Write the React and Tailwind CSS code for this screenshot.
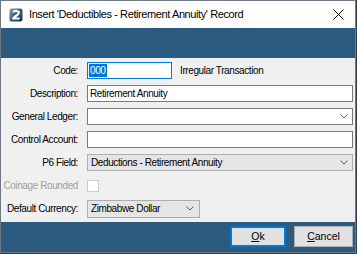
import React from "react";

const font = { fontFamily: '"Liberation Sans", Arial, sans-serif' };

function Chevron() {
  return (
    <svg width="8" height="5" viewBox="0 0 8 5" className="shrink-0">
      <path d="M0.5 0.5 L4 4 L7.5 0.5" fill="none" stroke="#606060" strokeWidth="1" />
    </svg>
  );
}

function AppIcon() {
  return (
    <svg width="14" height="14" viewBox="0 0 14 14" className="shrink-0">
      <defs>
        <linearGradient id="ig" x1="0" y1="0" x2="1" y2="1">
          <stop offset="0" stopColor="#9aa7b3" />
          <stop offset="0.5" stopColor="#3c5a78" />
          <stop offset="1" stopColor="#1d2f44" />
        </linearGradient>
      </defs>
      <rect x="0.5" y="0.5" width="13" height="13" rx="2" fill="url(#ig)" />
      <path d="M4 4 Q7 2 10 4 Q10 6.5 6 8.5 L4 10.5 L10.5 10.5" fill="none" stroke="#fff" strokeWidth="2" strokeLinejoin="round" />
    </svg>
  );
}

function Label({ children, disabled }) {
  return (
    <div className={`w-[77px] shrink-0 text-right whitespace-nowrap ${disabled ? "text-[#a0a0a0]" : "text-black"}`}>
      {children}
    </div>
  );
}

function Row({ label, disabled, children }) {
  return (
    <div className="flex items-center h-[17px] gap-[9px]">
      <Label disabled={disabled}>{label}</Label>
      {children}
    </div>
  );
}

export default function App() {
  return (
    <div className="w-[357px] h-[254px] bg-[#2f3d49]" style={font}>
      <div className="w-[356px] h-[253px] border border-[#6d7a86] flex flex-col bg-white">
        {/* title bar */}
        <div className="h-[27px] flex items-center pl-[8px] pr-[7px] bg-white">
          <AppIcon />
          <span className="ml-[6px] text-[11px] tracking-[-0.4px] text-black">
            Insert 'Deductibles - Retirement Annuity' Record
          </span>
          <svg width="11" height="11" viewBox="0 0 11 11" className="ml-auto mr-[4px]">
            <path d="M0.5 0.5 L10.5 10.5 M10.5 0.5 L0.5 10.5" stroke="#000" strokeWidth="1" />
          </svg>
        </div>
        <div className="h-[30px] bg-[#2b5b80]" />

        {/* form */}
        <div className="h-[164px] bg-[#f0f0f0] pt-[4px] pr-[2px] flex flex-col gap-[6px] text-[10px] tracking-[-0.4px]">
          <Row label="Code:">
            <div className="w-[85px] h-[17px] bg-white border border-[#0078d7] flex items-center pl-[1px]">
              <span className="bg-[#0078d7] text-white px-px leading-[13px]">000</span>
            </div>
            <span className="ml-[-1px] text-black">Irregular Transaction</span>
          </Row>
          <Row label="Description:">
            <div className="flex-1 h-[17px] bg-white border border-[#7a7a7a] flex items-center pl-[2px] text-black">
              Retirement Annuity
            </div>
          </Row>
          <Row label="General Ledger:">
            <div className="flex-1 h-[17px] bg-white border border-[#7a7a7a] flex items-center justify-end pr-[4px]">
              <Chevron />
            </div>
          </Row>
          <Row label="Control Account:">
            <div className="flex-1 h-[17px] bg-white border border-[#7a7a7a]" />
          </Row>
          <Row label="P6 Field:">
            <div className="flex-1 h-[17px] bg-[#e5e5e5] border border-[#adadad] flex items-center pl-[3px] pr-[4px] text-black">
              <span>Deductions - Retirement Annuity</span>
              <span className="ml-auto"><Chevron /></span>
            </div>
          </Row>
          <Row label="Coinage Rounded" disabled>
            <div className="w-[12px] h-[12px] bg-white border border-[#cccccc]" />
          </Row>
          <Row label="Default Currency:">
            <div className="w-[113px] h-[18px] bg-[#e5e5e5] border border-[#adadad] flex items-center pl-[3px] pr-[5px] text-black">
              <span>Zimbabwe Dollar</span>
              <span className="ml-auto"><Chevron /></span>
            </div>
          </Row>
        </div>

        {/* button bar */}
        <div className="flex-1 bg-[#2b5b80] flex justify-end items-start pt-[4px] pr-[2px] gap-[8px] text-[10.5px] text-black">
          <button className="w-[56px] h-[21px] bg-[#e1e1e1] border-2 border-[#0078d7] flex items-center justify-center">
            <span><span className="underline">O</span>k</span>
          </button>
          <button className="w-[59px] h-[21px] bg-[#e1e1e1] border border-[#adadad] flex items-center justify-center">
            <span><span className="underline">C</span>ancel</span>
          </button>
        </div>
      </div>
    </div>
  );
}
